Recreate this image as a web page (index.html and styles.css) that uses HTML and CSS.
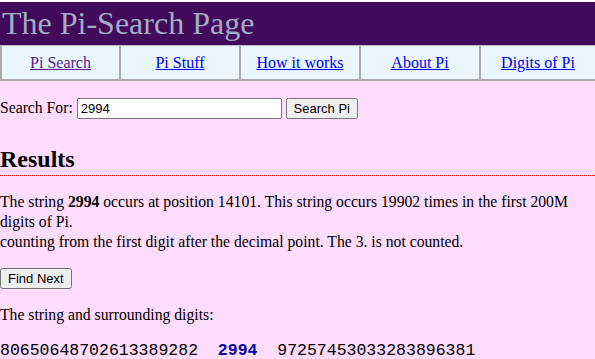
FILE: index.html
```html
<!DOCTYPE html>
<html lang="en">
<head>
<meta charset="UTF-8">
<title>The Pi-Search Page</title>
<link rel="stylesheet" href="styles.css">
</head>
<body>
<div class="header">The Pi-Search Page</div>
<div class="nav">
  <div class="navcell"><a class="visited" href="#">Pi Search</a></div>
  <div class="navcell"><a href="#">Pi Stuff</a></div>
  <div class="navcell"><a href="#">How it works</a></div>
  <div class="navcell"><a href="#">About Pi</a></div>
  <div class="navcell"><a href="#">Digits of Pi</a></div>
</div>
<form class="search" onsubmit="return false">
  Search For: <input type="text" class="query" value="2994"> <input type="submit" class="btn" value="Search Pi">
</form>
<h2 class="results">Results</h2>
<div class="content">
<p>The string <b>2994</b> occurs at position 14101. This string occurs 19902 times in the first 200M digits of Pi.<br>
counting from the first digit after the decimal point. The 3. is not counted.</p>
<p><input type="button" class="btn" value="Find Next"></p>
<p>The string and surrounding digits:</p>
<p class="digits">80650648702613389282&nbsp; <span class="hit">2994</span> &nbsp;97257453033283896381</p>
</div>
</body>
</html>
```

FILE: styles.css
```css
body {
  margin: 0;
  border-top: 2px solid #fff;
  background-color: #fedcfe;
  color: #000;
  font-family: 'Liberation Serif', 'Times New Roman', serif;
  font-size: 16px;
}
.header {
  background-color: #420a5a;
  color: #a3abc6;
  font-size: 32px;
  height: 43px;
  line-height: 42px;
  padding-left: 2px;
}
.nav {
  display: flex;
  background-color: #eaf6ff;
  border-top: 1px solid #bbb;
  border-bottom: 2px solid #aaa;
}
.navcell {
  width: 118px;
  height: 33px;
  line-height: 34px;
  text-align: center;
  border-left: 2px solid #aaa;
}
.navcell:first-child {
  width: 117px;
}
.navcell:last-child {
  flex: 1;
}
.nav a {
  color: #0000ee;
}
.nav a.visited {
  color: #551a8b;
}
.search {
  margin: 17px 0 0 0;
  font-size: 15.7px;
}
.query {
  width: 197px;
  font-family: 'Liberation Sans', Arial, sans-serif;
  font-size: 13px;
}
.btn {
  font-family: 'Liberation Sans', Arial, sans-serif;
  font-size: 13px;
}
.results {
  font-size: 24px;
  margin: 27px 0 0 0;
  padding-bottom: 2px;
  border-bottom: 1px dotted #e00;
}
.content {
  font-size: 15.7px;
  line-height: 20px;
}
.content p {
  margin: 16px 0;
}
.digits {
  font-family: 'Liberation Mono', 'DejaVu Sans Mono', monospace;
  font-size: 16.5px;
}
.hit {
  color: #0000aa;
  font-weight: bold;
}
```
